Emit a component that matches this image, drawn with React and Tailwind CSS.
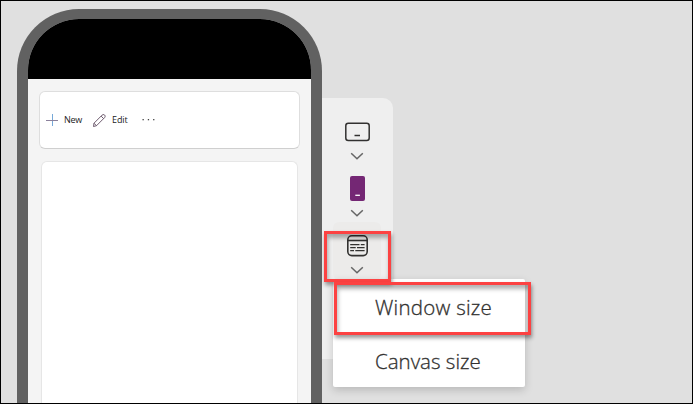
function Chevron() {
  return (
    <svg width="14" height="8" viewBox="0 0 14 8" fill="none" stroke="#666" strokeWidth="1.5">
      <path d="M1.2 1.2 7 6.8l5.8-5.6" />
    </svg>
  );
}

function TabletIcon() {
  return (
    <svg width="25" height="20" viewBox="0 0 25 20" fill="none" stroke="#323130" strokeWidth="1.5">
      <rect x="0.8" y="1.2" width="23.4" height="17.2" rx="2.5" />
      <path d="M9.5 13.5h5.5" />
    </svg>
  );
}

function PhoneIcon() {
  return (
    <svg width="15" height="25" viewBox="0 0 15 25">
      <rect width="15" height="25" rx="2" fill="#742774" />
      <path d="M5.3 19.3h4.6" stroke="#fff" strokeWidth="1.3" />
    </svg>
  );
}

function FormIcon() {
  return (
    <svg width="21" height="22" viewBox="0 0 21 22" fill="none" stroke="#323130" strokeWidth="1.6">
      <rect x="0.8" y="0.8" width="19.4" height="19.8" rx="4" />
      <path d="M1 5.5h19" />
      <path d="M3.2 9.6h9.3M13.8 9.6h3.8M3.2 12.6h5.5M10 12.6h7.6M3.2 15.6h3.8M8.3 15.6h9.3" strokeWidth="1.4" />
    </svg>
  );
}

function Phone() {
  return (
    <div className="h-[420px] w-[304.5px] shrink-0 rounded-t-[62px] bg-[#616161] px-[10.5px] pt-[10.5px]">
      <div className="flex h-full flex-col overflow-hidden rounded-t-[51px] bg-[#f4f4f4]">
        <div className="h-[60px] shrink-0 bg-black" />
        <div className="flex flex-1 flex-col gap-[12px] px-[11.5px] pt-3">
          <div className="flex h-[58px] shrink-0 items-center rounded-[6px] border border-[#dedede] border-b-[#cfcfcf] bg-white pl-[6px] font-['Open_Sans','Noto_Sans',sans-serif] text-[9px] text-[#222]">
            <svg width="12" height="12" viewBox="0 0 12 12" fill="none">
              <path d="M6.5 0v12" stroke="#76a9d8" />
              <path d="M0 6.5h12" stroke="#8c819c" />
            </svg>
            <span className="ml-[6px] w-[29px] tracking-[-0.25px]">New</span>
            <svg width="13" height="13" viewBox="0 0 13 13" fill="none" stroke="#5f4b60" strokeWidth="0.9">
              <path d="m1 9.2 8.1-8.1c1.7-1.7 4.2.8 2.5 2.5l-8.1 8.1-3 .8ZM1 9.2l2.5 2.5M8.1 2.1l2.5 2.5" />
            </svg>
            <span className="ml-[6px] w-[30px] tracking-[-0.1px]">Edit</span>
            <svg width="14" height="4" viewBox="0 0 14 4" fill="#444">
              <rect x="0.5" y="1" width="1.3" height="1.3" />
              <rect x="5.8" y="1" width="1.3" height="1.3" />
              <rect x="11.1" y="1" width="1.3" height="1.3" />
            </svg>
          </div>
          <div className="mr-[1.5px] ml-[1.5px] flex-1 rounded-t-[6px] border border-b-0 border-[#e6e6e6] bg-white" />
        </div>
      </div>
    </div>
  );
}

function SizePanel() {
  return (
    <div className="mt-[89.5px] flex h-[261px] w-[71.5px] flex-col items-center rounded-r-[10px] bg-[#efefef] pt-[24px]">
      <TabletIcon />
      <div className="mt-[10px] h-2"><Chevron /></div>
      <div className="mt-[16px] h-[25px]"><PhoneIcon /></div>
      <div className="mt-[8px] h-2"><Chevron /></div>
      <div className="mt-[4.5px] flex h-[58px] w-12 flex-col items-center rounded-[6px] bg-[#ecebea] pt-[13.5px]">
        <FormIcon />
        <div className="mt-[9px] h-2"><Chevron /></div>
      </div>
    </div>
  );
}

export default function App() {
  return (
    <div className="relative h-[404px] w-[693px] overflow-hidden border border-black bg-[#e0e0e0]">
      <div className="flex h-full items-start pt-[7.5px] pl-4">
        <Phone />
        <SizePanel />
      </div>

      <div className="absolute top-[278px] left-[332px] flex h-[108px] w-[192px] flex-col rounded-[2px] bg-white font-['Open_Sans','Noto_Sans',sans-serif] text-[20.5px] font-light text-[#323130] shadow-[0_3px_8px_rgba(0,0,0,0.18)] [-webkit-text-stroke:0.3px_#323130]">
        <div className="flex h-[54px] items-center pl-[42px] pt-[3px] tracking-[0.25px]">Window size</div>
        <div className="flex h-[54px] items-center pl-[42px] pt-[3px]">Canvas size</div>
      </div>

      <div className="absolute top-[230px] left-[323px] h-[51px] w-[67px] border-3 border-[#fc4242] shadow-[1px_3px_4px_rgba(0,0,0,0.4),inset_1px_4px_4px_rgba(0,0,0,0.3)]" />
      <div className="absolute top-[281px] left-[333px] h-[53px] w-[197px] border-3 border-[#fc4242] shadow-[1px_3px_4px_rgba(0,0,0,0.4),inset_1px_4px_4px_rgba(0,0,0,0.3)]" />
    </div>
  );
}
